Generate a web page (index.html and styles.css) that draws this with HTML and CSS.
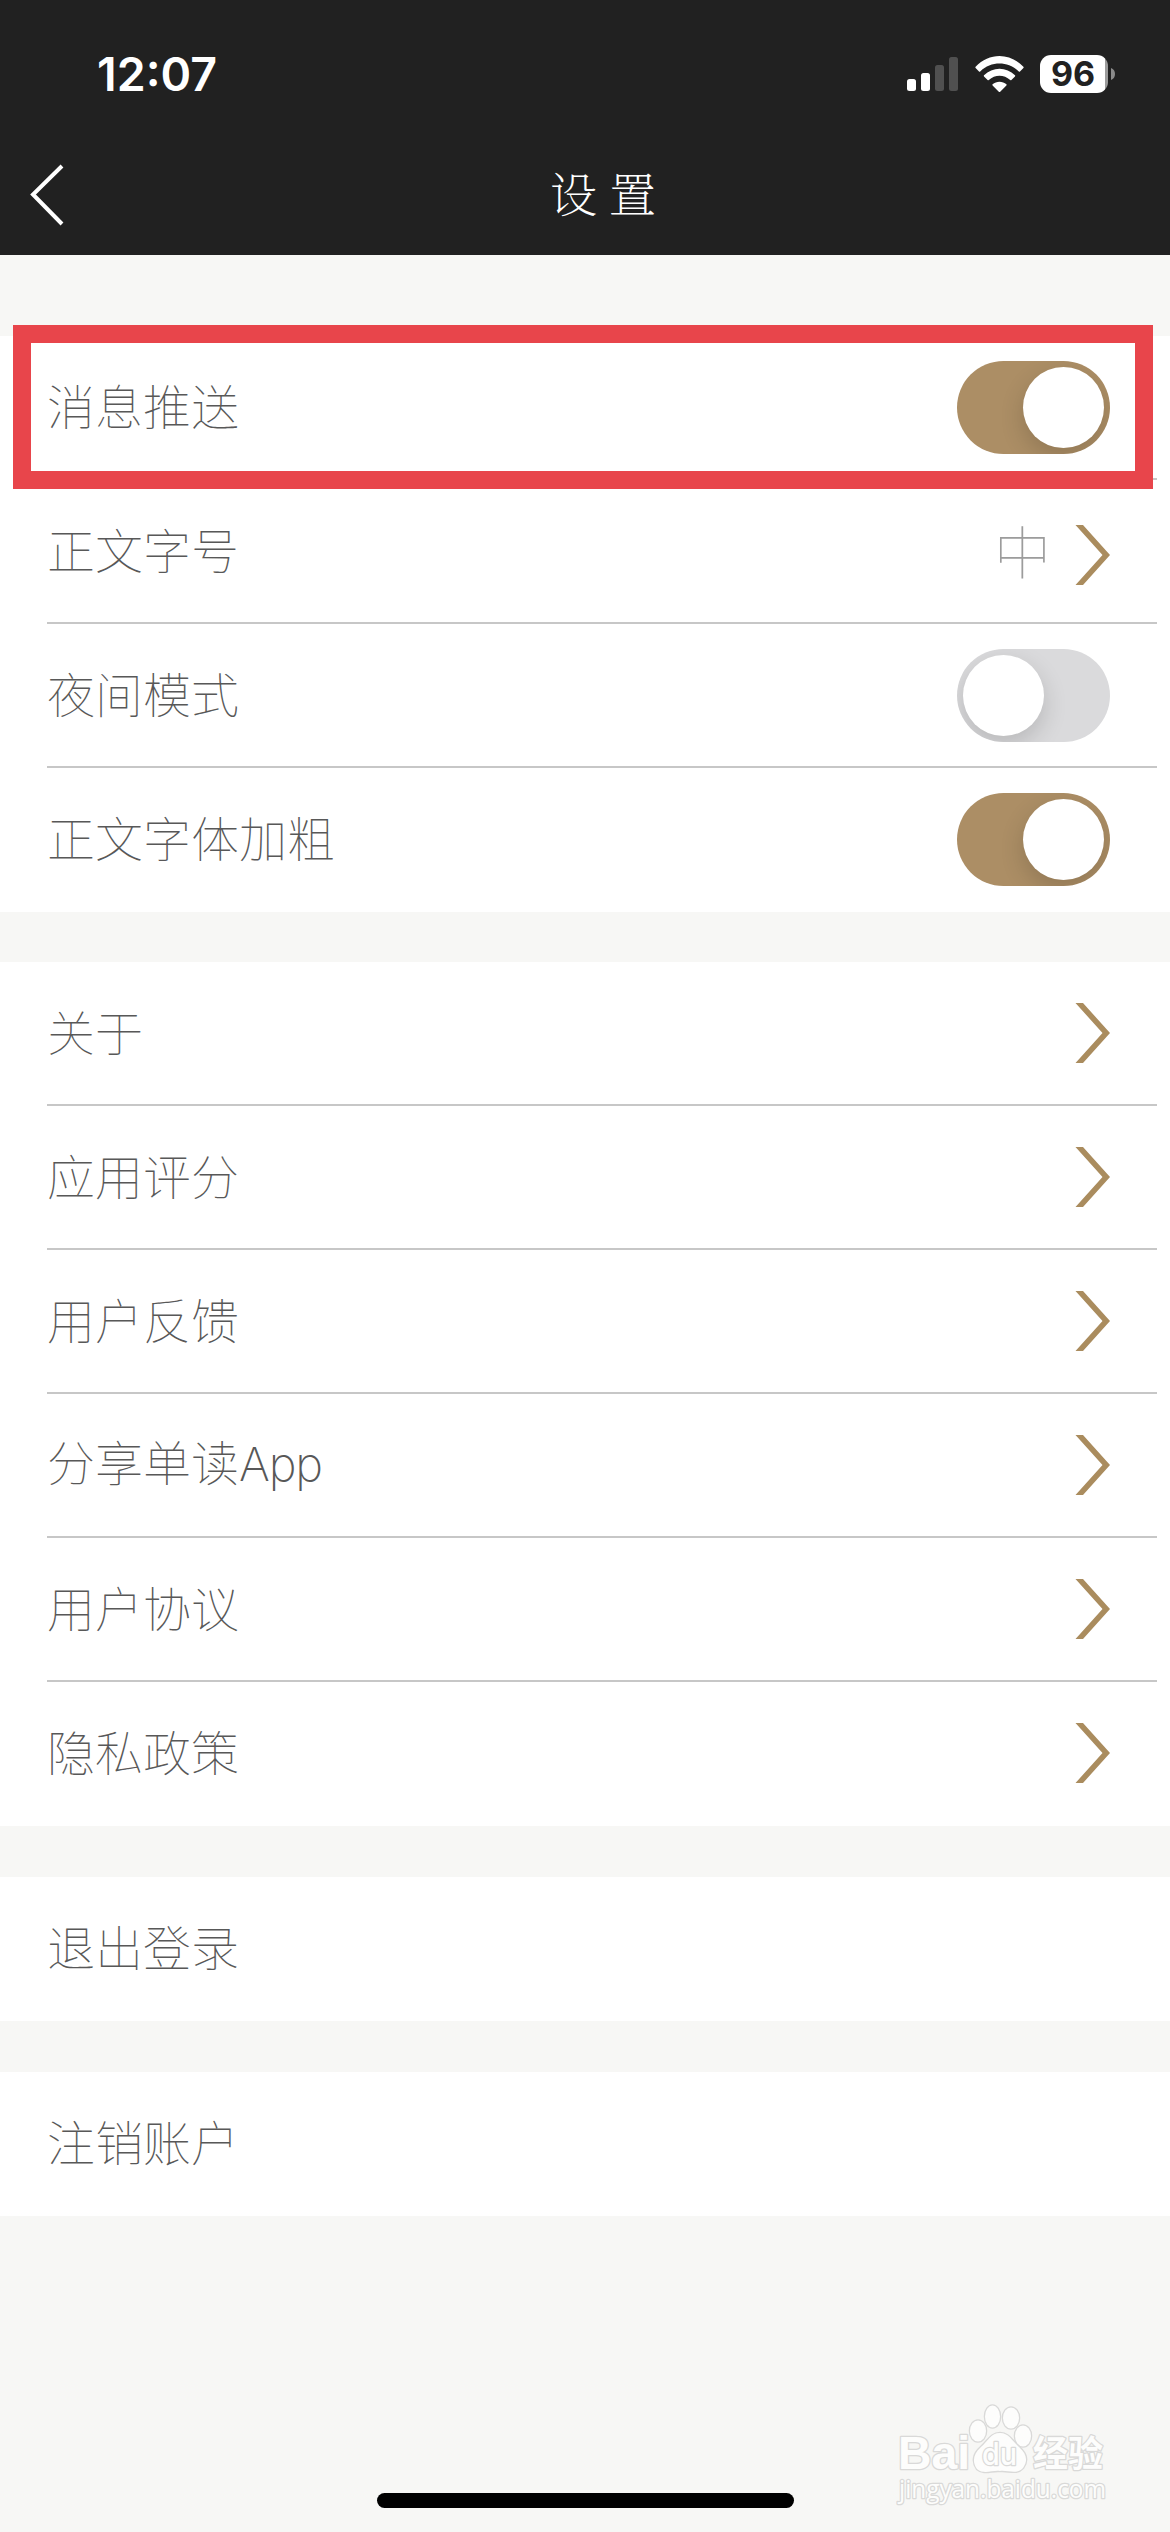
FILE: index.html
```
<!DOCTYPE html>
<html lang="zh-CN">
<head>
<meta charset="utf-8">
<title>设置</title>
<link rel="stylesheet" href="styles.css">
</head>
<body>
<svg class="defs" width="0" height="0" aria-hidden="true">
  <symbol id="chevron" viewBox="0 0 35 60"><path d="M0.5 0H8L35 30L8 60H0.5L27.5 30Z"/></symbol>
</svg>
<header class="header">
  <div class="status">
    <span class="time">12:07</span>
    <div class="indicators">
      <svg class="signal" width="52" height="35" viewBox="0 0 52 35">
        <rect x="0" y="22" width="9" height="12" rx="2.5" fill="#fff"/>
        <rect x="14" y="16" width="9" height="18" rx="2.5" fill="#fff"/>
        <rect x="28" y="8" width="9" height="26" rx="2.5" fill="#505050"/>
        <rect x="42" y="0" width="9" height="34" rx="2.5" fill="#505050"/>
      </svg>
      <svg class="wifi" width="49" height="37" viewBox="0 0 49 37" fill="#fff">
        <path d="M0.6 10.8C14 -3.6 35 -3.6 48.4 10.8Q48.9 11.4 48.4 12L45 15.4Q44.4 15.9 43.8 15.4C33 4.8 16 4.8 5.2 15.4Q4.6 15.9 4 15.4L0.6 12Q0.1 11.4 0.6 10.8Z"/>
        <path d="M9 19.2C17.5 10.5 31.5 10.5 40 19.2Q40.5 19.8 40 20.4L36.4 24Q35.8 24.5 35.2 24C29 18.3 20 18.3 13.8 24Q13.2 24.5 12.6 24L9 20.4Q8.5 19.8 9 19.2Z"/>
        <path d="M17.6 28.2C21.3 24.8 27.7 24.8 31.4 28.2Q32 28.8 31.4 29.4L25.2 35.7Q24.5 36.4 23.8 35.7L17.6 29.4Q17 28.8 17.6 28.2Z"/>
      </svg>
      <div class="battery"><span class="level">96</span></div>
      <svg class="cap" width="4" height="12" viewBox="0 0 4 12"><path d="M0 0Q4 1.5 4 6Q4 10.5 0 12Z" fill="#8b8b8b"/></svg>
    </div>
  </div>
  <nav class="nav">
    <svg class="back" width="34" height="62" viewBox="0 0 34 62"><path d="M32 2L3 30.5L32 60" fill="none" stroke="#fff" stroke-width="4"/></svg>
    <h1 class="title">设置</h1>
  </nav>
</header>
<main class="settings">
  <section class="group">
    <div class="row"><span class="label">消息推送</span><span class="switch on"><i class="knob"></i></span></div>
    <div class="row"><span class="label">正文字号</span><span class="value">中</span><svg class="chevron low"><use href="#chevron"/></svg></div>
    <div class="row"><span class="label">夜间模式</span><span class="switch"><i class="knob"></i></span></div>
    <div class="row end"><span class="label">正文字体加粗</span><span class="switch on"><i class="knob"></i></span></div>
    <div class="highlight"></div>
  </section>
  <section class="group">
    <div class="row"><span class="label">关于</span><svg class="chevron"><use href="#chevron"/></svg></div>
    <div class="row"><span class="label">应用评分</span><svg class="chevron"><use href="#chevron"/></svg></div>
    <div class="row"><span class="label">用户反馈</span><svg class="chevron"><use href="#chevron"/></svg></div>
    <div class="row"><span class="label">分享单读<span class="latin">App</span></span><svg class="chevron"><use href="#chevron"/></svg></div>
    <div class="row"><span class="label">用户协议</span><svg class="chevron"><use href="#chevron"/></svg></div>
    <div class="row end"><span class="label">隐私政策</span><svg class="chevron"><use href="#chevron"/></svg></div>
  </section>
  <section class="group"><div class="row end"><span class="label">退出登录</span></div></section>
  <section class="group"><div class="row end"><span class="label">注销账户</span></div></section>
</main>
<footer class="footer">
  <svg class="watermark" width="216" height="108" viewBox="0 0 216 108">
    <g fill="#fdfdfc" stroke="#d9d9d8" stroke-width="2.6" stroke-linejoin="round" paint-order="stroke">
      <ellipse cx="82" cy="31" rx="8" ry="10.5"/>
      <ellipse cx="96.500" cy="16.500" rx="7.500" ry="11"/>
      <ellipse cx="115" cy="18" rx="8" ry="10.5"/>
      <ellipse cx="127" cy="36" rx="8" ry="10.5"/>
      <path d="M104 33C113 33 116 41 123 47C131 54 132 61 127 68C121 75 112 70 104 71C96 70 88 75 81 69C76 62 77 54 85 47C92 41 95 33 104 33Z"/>
      <text class="brand" x="2" y="69" textLength="72" lengthAdjust="spacingAndGlyphs">Bai</text>
      <text class="du" x="86" y="65" textLength="35" lengthAdjust="spacingAndGlyphs">du</text>
      <text class="cn" x="137" y="67" textLength="70" lengthAdjust="spacingAndGlyphs">经验</text>
      <text class="url" x="3" y="98" textLength="207" lengthAdjust="spacingAndGlyphs">jingyan.baidu.com</text>
    </g>
  </svg>
  <div class="home-bar"></div>
</footer>
</body>
</html>
```
FILE: styles.css
```
* { box-sizing: border-box; }
body {
  margin: 0;
  width: 1170px;
  height: 2532px;
  display: flex;
  flex-direction: column;
  background: #f7f7f5;
  font-family: "Noto Sans CJK SC", sans-serif;
  overflow: hidden;
}
.defs { position: absolute; }
.header { height: 255px; background: #212121; color: #fff; }
.status {
  height: 141px;
  padding: 7px 55px 0 97px;
  display: flex;
  align-items: center;
  justify-content: space-between;
}
.time {
  font: 600 46.500px/60px Inter, sans-serif;
  letter-spacing: 0;
}
.indicators { display: flex; align-items: center; }
.signal { margin-right: 16px; }
.wifi { margin-right: 16px; }
.battery {
  width: 68px;
  height: 38px;
  border-radius: 11px;
  background: linear-gradient(to right, #fff 65.5px, #9b9b9b 65.5px);
  display: flex;
  align-items: center;
  justify-content: center;
  padding-right: 2px;
}
.level { font: 700 34px/38px Inter, sans-serif; color: #212121; }
.cap { margin-left: 3px; }
.nav {
  height: 114px;
  display: grid;
  grid-template-columns: 64px 1fr 64px;
  align-items: start;
}
.back { margin: 23px 0 0 30px; }
.title {
  margin: 16px 0 0;
  padding-left: 48px;
  text-align: center;
  font: 200 47px/70px "Noto Serif CJK SC", "Noto Sans CJK SC", serif;
  letter-spacing: 12px;
}
.settings {
  padding-top: 81px;
  display: flex;
  flex-direction: column;
  gap: 51px;
}
.group { position: relative; background: #fff; }
.group:nth-child(2) { margin-top: -1px; }
.row {
  height: 144px;
  margin-left: 47px;
  margin-right: 13px;
  padding-right: 47px;
  display: flex;
  align-items: center;
  border-bottom: 2px solid #c7c7c7;
}
.end { border-bottom-color: transparent; }
.label {
  flex: 1;
  margin-top: -6px;
  font-size: 48px;
  font-weight: 100;
  line-height: 70px;
  color: #585858;
}
.latin {
  font-family: Inter, sans-serif;
  font-size: 47px;
  font-weight: 200;
  letter-spacing: -1.2px;
}
.value {
  margin-top: -4px;
  margin-right: 24px;
  font-size: 57px;
  font-weight: 100;
  line-height: 70px;
  color: #9c9c9c;
}
.chevron { width: 35px; height: 60px; fill: #aa8c5e; }
.low { margin-top: 7px; }
.switch {
  width: 153px;
  height: 93px;
  padding: 6px;
  border-radius: 47px;
  background: #dadadc;
  display: flex;
  overflow: hidden;
  margin-top: 1px;
}
.on { background: #ac8e65; justify-content: flex-end; }
.knob {
  width: 81px;
  height: 81px;
  border-radius: 50%;
  background: #fff;
  box-shadow: 0 9px 24px rgba(0, 0, 0, 0.16);
}
.highlight {
  position: absolute;
  left: 13px;
  top: -11px;
  width: 1140px;
  height: 164px;
  border: 18px solid #e8454b;
}
.footer {
  margin-top: auto;
  height: 132px;
  display: flex;
  flex-direction: column;
  justify-content: space-between;
  align-items: center;
  padding-bottom: 24px;
}
.watermark { align-self: flex-end; margin-right: 58px; flex: none; margin-bottom: -15px; }
.home-bar { width: 417px; height: 15px; border-radius: 8px; background: #000; flex: none; }
.brand { font: 700 46px "Liberation Sans", sans-serif; }
.du { font: 500 31px Inter, sans-serif; }
.cn { font: 700 36px "Noto Sans CJK SC", sans-serif; }
.url { font: 400 25px "Open Sans", sans-serif; }
```
